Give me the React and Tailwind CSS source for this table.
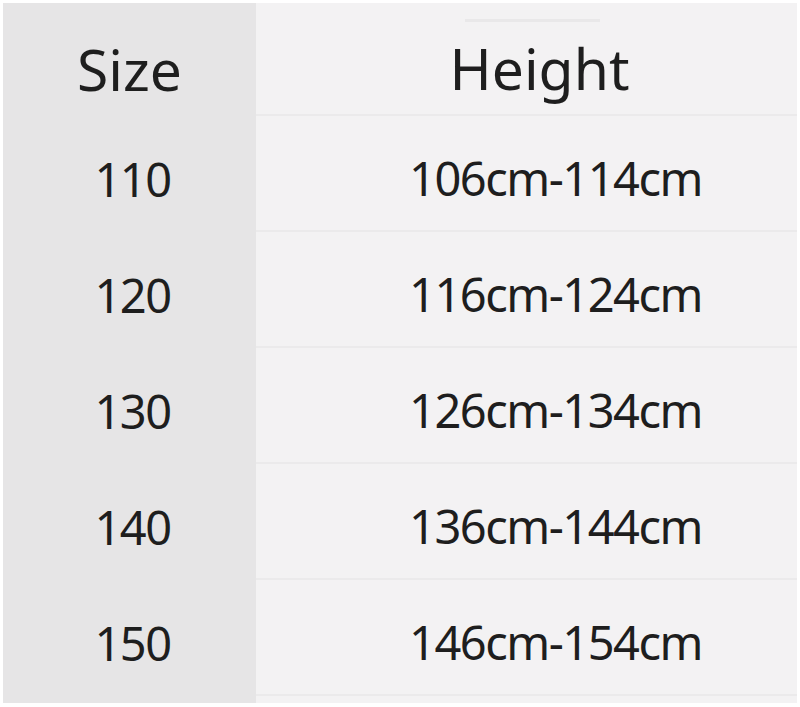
import React from "react";

const rows = [
  { size: "110", height: "106cm-114cm" },
  { size: "120", height: "116cm-124cm" },
  { size: "130", height: "126cm-134cm" },
  { size: "140", height: "136cm-144cm" },
  { size: "150", height: "146cm-154cm" },
];

const App = () => {
  return (
    <div
      className="w-[800px] h-[707px] bg-white pt-[3px] pl-[3px] pr-[3px] overflow-hidden text-[#1e1e1e]"
      style={{ fontFamily: '"Noto Sans", "Open Sans", sans-serif' }}
    >
      <div className="flex h-[700px]">
        {/* size column */}
        <div className="w-[253px] bg-[#e6e5e6] flex flex-col">
          <div className="h-[113px] flex items-center justify-center pt-[20px] text-[57px] leading-none">
            Size
          </div>
          {rows.map((r) => (
            <div
              key={r.size}
              className="h-[116px] flex items-center justify-center pl-[6px] pt-[10px] text-[47px] leading-none tracking-[-1.5px]"
            >
              {r.size}
            </div>
          ))}
        </div>

        {/* height column */}
        <div className="flex-1 bg-[#f3f2f3] flex flex-col">
          <div className="relative h-[113px] flex items-center justify-center pl-[26px] pt-[20px] text-[57px] leading-none border-b-2 border-[#ebeaeb]">
            <div className="absolute top-[16px] left-[209px] w-[135px] h-[3px] bg-[#e9e8e9]" />
            Height
          </div>
          {rows.map((r) => (
            <div
              key={r.size}
              className="h-[116px] flex items-center justify-center pl-[58px] pt-[10px] text-[47px] leading-none tracking-[-1.5px] border-b-2 border-[#ebeaeb]"
            >
              {r.height}
            </div>
          ))}
        </div>
      </div>
    </div>
  );
};

export default App;
